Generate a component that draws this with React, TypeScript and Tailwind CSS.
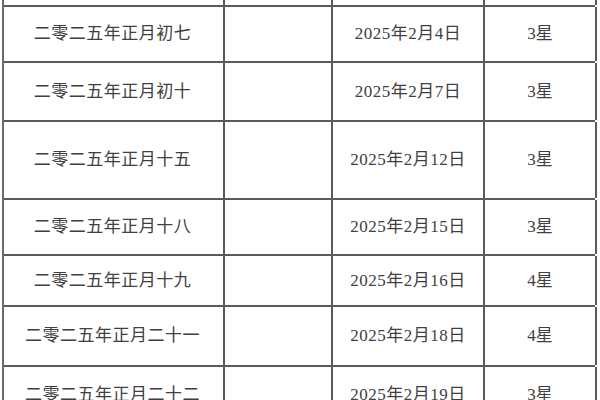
const rows = [
  { lunar: '二零二五年正月初七', date: '2025年2月4日', star: '3星', h: 'h-[56px]' },
  { lunar: '二零二五年正月初十', date: '2025年2月7日', star: '3星', h: 'h-[59px]' },
  { lunar: '二零二五年正月十五', date: '2025年2月12日', star: '3星', h: 'h-[78px]' },
  { lunar: '二零二五年正月十八', date: '2025年2月15日', star: '3星', h: 'h-[56px]' },
  { lunar: '二零二五年正月十九', date: '2025年2月16日', star: '4星', h: 'h-[51px]' },
  { lunar: '二零二五年正月二十一', date: '2025年2月18日', star: '4星', h: 'h-[60px]' },
  { lunar: '二零二五年正月二十二', date: '2025年2月19日', star: '3星', h: 'h-[58px]' },
];

const cols = 'grid grid-cols-[221px_108px_152px_112px]';
const cell = 'flex items-center justify-center border-r-2 border-[#5a5a5a]';

export default function App() {
  return (
    <div className="h-[400px] w-[600px] overflow-hidden bg-white font-['Liberation_Serif','Noto_Sans_CJK_SC',serif] text-[17px] text-[#404040]">
      <div className="ml-[2px] w-[593px] border-l-2 border-[#6a6a6a]">
        <div className={`${cols} h-[7px] border-b-2 border-[#5a5a5a]`}>
          <div className={cell} />
          <div className={cell} />
          <div className={cell} />
          <div className={cell} />
        </div>
        {rows.map((r) => (
          <div key={r.date} className={`${cols} ${r.h} border-b-2 border-[#5a5a5a]`}>
            <div className={`${cell} pr-[2px] tracking-[0.5px]`}>{r.lunar}</div>
            <div className={cell} />
            <div className={`${cell} tracking-[0.5px]`}>{r.date}</div>
            <div className={cell}>{r.star}</div>
          </div>
        ))}
      </div>
    </div>
  );
}
